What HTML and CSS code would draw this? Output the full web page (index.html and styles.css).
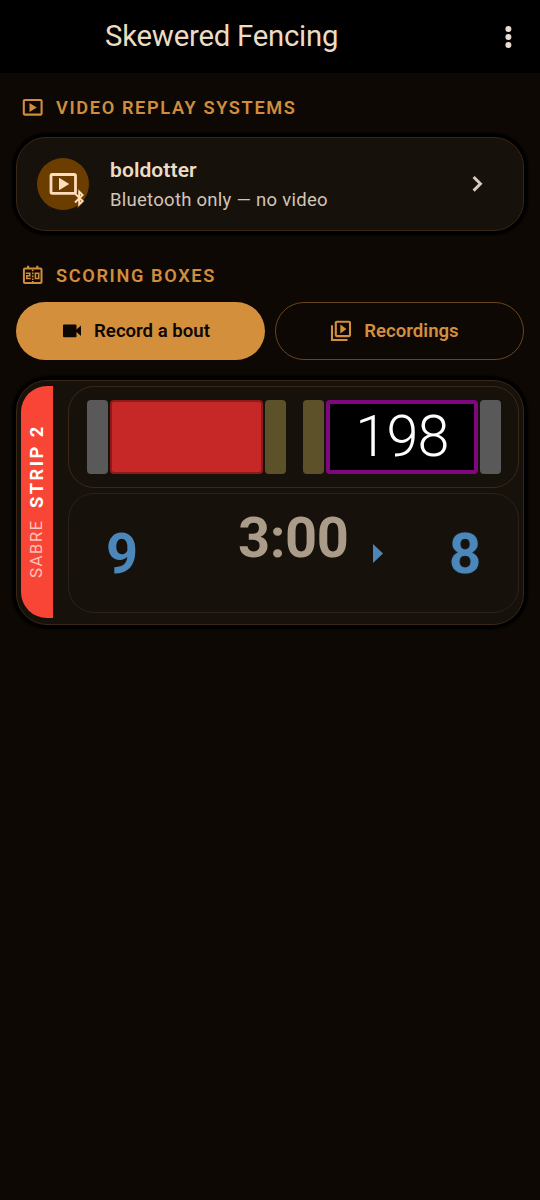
FILE: index.html
```html
<!DOCTYPE html>
<html lang="en">
<head>
<meta charset="utf-8">
<title>Skewered Fencing</title>
<link rel="stylesheet" href="styles.css">
</head>
<body>
<header class="topbar">
  <h1 class="title">Skewered Fencing</h1>
  <svg class="more" viewBox="0 0 8 24"><circle cx="4.4" cy="4" r="3"/><circle cx="4.4" cy="12" r="3"/><circle cx="4.4" cy="20" r="3"/></svg>
</header>
<main class="content">
  <h2 class="section">
    <svg class="section-icon" viewBox="0 0 22 22"><rect x="1.8" y="4" width="17.8" height="14.6" rx="1" fill="none" stroke="currentColor" stroke-width="2.1"/><path d="M7.5 6.9v9l7.3-4.5z" fill="currentColor"/></svg>
    <span>VIDEO REPLAY SYSTEMS</span>
  </h2>
  <section class="card device">
    <div class="avatar">
      <svg viewBox="0 0 52 52" width="52" height="52"><rect x="14" y="16.5" width="24.5" height="18.8" rx="1.3" fill="none" stroke="currentColor" stroke-width="2.8"/><path d="M22 19.8v12.5l10.2-6.2z" fill="currentColor"/><path d="M38.4 36.4l6.8 6.8-3.2 3.2V33.6l3.2 3.2-6.8 6.8" fill="none" stroke="#6b3e00" stroke-width="3.6"/><path d="M38 35.5l7.6 7.5-3.4 3.4V33.6l3.4 3.4-7.6 7.5" fill="none" stroke="currentColor" stroke-width="1.9"/></svg>
    </div>
    <div class="device-text">
      <div class="device-name">boldotter</div>
      <div class="device-sub">Bluetooth only — no video</div>
    </div>
    <svg class="chevron" viewBox="0 0 12 18"><path d="M1.6 2l6.8 6.8-6.8 6.8" fill="none" stroke="currentColor" stroke-width="3"/></svg>
  </section>
  <h2 class="section scoring">
    <svg class="section-icon" viewBox="0 0 22 22" fill="none" stroke="currentColor"><rect x="1.9" y="4.4" width="17.6" height="14.6" rx="1" stroke-width="2"/><path d="M6.1 1.8v3M15.3 1.8v3" stroke-width="2.2"/><path d="M3.8 9.3h4v2.5h-3v2.7h4M13.4 9.3h3.3v5.2h-3.3z" stroke-width="1.6"/><path d="M10.7 5.4v1.8M10.7 8.4v1.8M10.7 11.4v1.8M10.7 14.4v1.6M10.7 17v2" stroke-width="1.6"/></svg>
    <span>SCORING BOXES</span>
  </h2>
  <div class="actions">
    <button class="btn filled"><svg width="20" height="16" viewBox="0 0 20 16"><path d="M2 1.5h11.5q1 0 1 1V6.6L19 2.5v10.6L14.5 9v4.3q0 1-1 1H2q-1 0-1-1V2.5q0-1 1-1z" fill="currentColor"/></svg><span>Record a bout</span></button>
    <button class="btn outlined"><svg width="22" height="22" viewBox="0 0 22 22"><path d="M2 5.2V20h15.5" fill="none" stroke="currentColor" stroke-width="2.1"/><rect x="5.8" y="1.7" width="14.2" height="14.4" rx="1" fill="none" stroke="currentColor" stroke-width="2.1"/><path d="M10.3 4.4v9l6.2-4.5z" fill="currentColor"/></svg><span>Recordings</span></button>
  </div>
  <section class="card box">
    <div class="strip"><span class="weapon">SABRE</span><span class="strip-name">STRIP 2</span></div>
    <div class="panels">
      <div class="panel lights">
        <i class="lamp grey"></i><i class="hit red"></i><i class="lamp olive"></i>
        <i class="lamp olive second"></i><div class="hit off">198</div><i class="lamp grey"></i>
      </div>
      <div class="panel score">
        <span class="points left">9</span>
        <span class="clock">3:00</span>
        <svg class="priority" viewBox="0 0 10 19"><path d="M0 0l10 9.5L0 19z" fill="currentColor"/></svg>
        <span class="points right">8</span>
      </div>
    </div>
  </section>
</main>
</body>
</html>
```
FILE: styles.css
```css
* { box-sizing: border-box; }
body { margin: 0; height: 1200px; background: #0d0804; font-family: Roboto, sans-serif; color: #ecdcc4; overflow: hidden; }
svg { display: block; flex: none; }
.topbar { height: 73px; background: #000; display: flex; align-items: center; justify-content: space-between; padding: 0 28px 0 105px; }
.title { margin: 0 0 2px; font-size: 29.3px; font-weight: 400; line-height: 34px; letter-spacing: -.22px; white-space: nowrap; }
.more { width: 8px; height: 24px; fill: #ecdccf; }
.content { padding: 22px 16px 0; }
.section { margin: 0; height: 24px; display: flex; align-items: center; gap: 12px; padding-left: 6px; font-size: 18.2px; font-weight: 580; letter-spacing: 1.62px; color: #d08d3e; white-space: nowrap; }
.section-icon { width: 22px; height: 22px; }
.card { background: #17110b; border: 1px solid #3a2716; border-radius: 30px; box-shadow: 0 0 2px 4px #000; }
.device { margin-top: 18px; height: 94px; display: flex; align-items: center; padding: 0 39px 0 20px; }
.avatar { width: 52px; height: 52px; border-radius: 50%; background: #6b3e00; color: #ffdcbb; }
.device-text { margin-left: 21px; flex: 1; white-space: nowrap; }
.device-name { font-size: 21px; line-height: 28px; font-weight: 600; letter-spacing: .1px; }
.device-sub { font-size: 18.5px; line-height: 26px; margin-top: 3px; color: #d2c4b8; letter-spacing: .27px; }
.chevron { width: 12px; height: 18px; color: #d8cabd; }
.scoring { margin-top: 32px; }
.actions { display: grid; grid-template-columns: 249px 249px; gap: 10px; margin-top: 15px; }
.btn { height: 58px; border-radius: 29px; display: flex; align-items: center; justify-content: center; gap: 12px; font: 580 18.6px/24px Roboto, sans-serif; padding: 0; border: 0; }
.filled { background: #d48f3d; color: #0d0703; padding-right: 9px; }
.outlined { background: transparent; color: #d48f3d; border: 1px solid #68461f; padding-right: 10px; }
.box { margin-top: 20px; height: 245px; display: flex; padding: 5px 4px 6px; border-radius: 31px; }
.strip { width: 32px; height: 232px; background: #f94536; writing-mode: vertical-rl; transform: rotate(180deg); border-radius: 0 26px 26px 0; display: flex; align-items: center; justify-content: center; gap: 12px; font-size: 18px; line-height: 32px; white-space: nowrap; color: #fff; padding-top: 2px; }
.weapon { font-size: 17px; letter-spacing: 1.3px; color: #ffc3b9; margin-left: 3px; }
.strip-name { font-size: 18.4px; font-weight: 700; letter-spacing: 2.4px; margin-left: 1px; }
.panels { margin-left: 15px; width: 451px; display: flex; flex-direction: column; gap: 5px; }
.panel { border: 1px solid #3a2716; border-radius: 26px; }
.lights { height: 102px; display: flex; align-items: center; padding-left: 18px; }
.lamp { width: 21px; height: 74px; border-radius: 4px; }
.grey { background: #595959; }
.olive { background: #5c5128; }
.hit { height: 74px; width: 152px; margin: 0 2px; border-radius: 4px; }
.red { width: 153px; background: #c62828; border: 2px solid #8e1b1a; }
.off { background: #000; border: 4px solid #7f087f; font-size: 57.5px; font-weight: 300; line-height: 66px; letter-spacing: -.8px; text-align: center; color: #fff; }
.second { margin-left: 17px; }
.score { height: 120px; display: flex; align-items: flex-start; padding-left: 37px; border-color: #2d2117; }
.points { font-size: 56px; line-height: 66px; font-weight: 750; color: #4b87b9; width: 32px; margin-top: 27px; }
.clock { margin-left: 100px; margin-top: 11px; width: 112px; font-size: 56px; line-height: 66px; font-weight: 700; letter-spacing: -.4px; color: #aa9c88; }
.priority { margin: 50px 0 0 23px; width: 10px; height: 19px; color: #4b87b9; }
.right { margin-left: 66px; text-shadow: 0 0 2px #1b3e5b; }
```
